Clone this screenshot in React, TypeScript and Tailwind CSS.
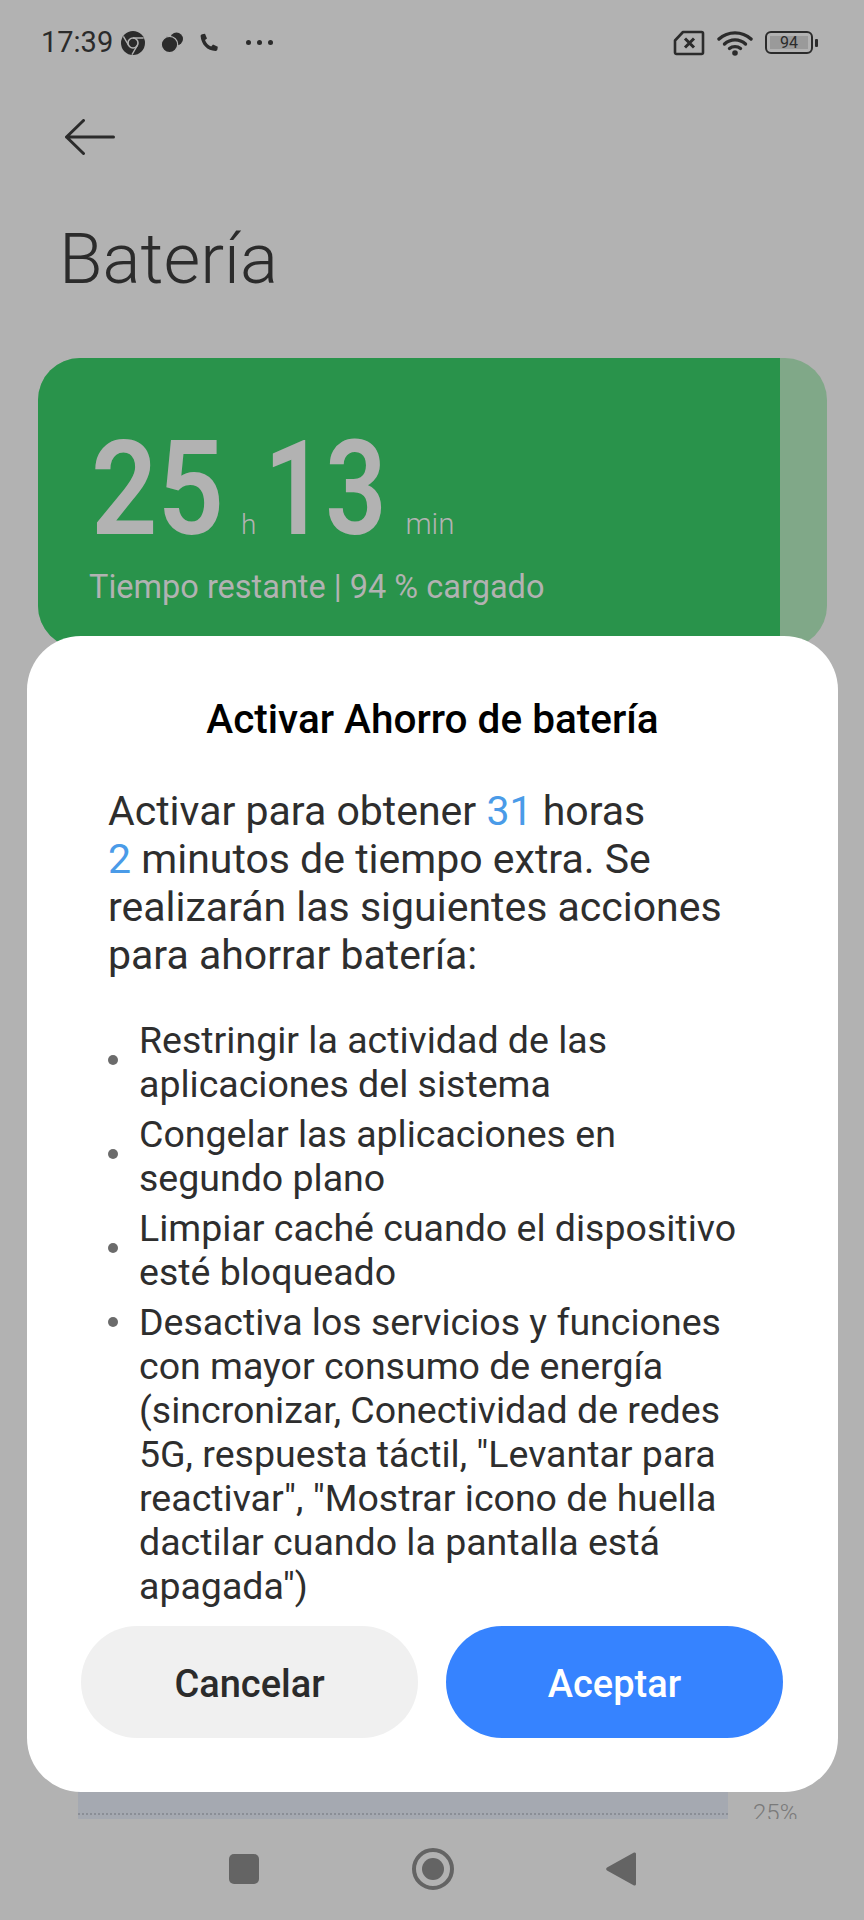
import React from "react"

const items = [
    ["Restringir la actividad de las", "aplicaciones del sistema"],
    ["Congelar las aplicaciones en", "segundo plano"],
    ["Limpiar caché cuando el dispositivo", "esté bloqueado"],
]

const lastItem = [
    "Desactiva los servicios y funciones",
    "con mayor consumo de energía",
    "(sincronizar, Conectividad de redes",
    '5G, respuesta táctil, "Levantar para',
    'reactivar", "Mostrar icono de huella',
    "dactilar cuando la pantalla está",
    'apagada")',
]

const ChromeIcon = () => (
    <svg width="24" height="24" viewBox="0 0 24 24">
        <circle cx="12" cy="12" r="12" fill="#2b2b2b" />
        <circle cx="12" cy="12" r="5" fill="#2b2b2b" stroke="#b2b2b2" strokeWidth="1.6" />
        <path d="M12 7h10.6M7.7 14.5 2.4 5.4M16.3 14.5 11 23.6" stroke="#b2b2b2" strokeWidth="1.4" fill="none" />
    </svg>
)

const BubblesIcon = () => (
    <svg width="24" height="24" viewBox="0 0 24 24" fill="#2b2b2b">
        <circle cx="16.5" cy="8" r="6.5" />
        <circle cx="9.5" cy="13.5" r="8.2" stroke="#b2b2b2" strokeWidth="1.2" />
    </svg>
)

const PhoneIcon = () => (
    <svg width="20" height="20" viewBox="0 0 20 20" fill="#2b2b2b">
        <path d="M3.2 1.2 6 .8l2 4.6-2 1.7c.9 2.9 3.4 5.4 6.2 6.4l1.8-2 4.8 2.2-.4 2.9c-.2.9-1 1.5-1.9 1.4C8.400 18 2.200 11.500 1.600 3.100c-.1-.9.600-1.700 1.600-1.900Z" />
    </svg>
)

const SimIcon = () => (
    <svg width="32" height="26" viewBox="0 0 32 26" fill="none" stroke="#2b2b2b">
        <path d="M10 2h18.500c.8 0 1.500.7 1.500 1.500v19c0 .8-.7 1.500-1.500 1.500h-25c-.8 0-1.500-.7-1.500-1.500V10.500Z" strokeWidth="2.600" strokeLinejoin="round" />
        <path d="M12 8.500l9 9M21 8.500l-9 9" strokeWidth="3" />
    </svg>
)

const WifiIcon = () => (
    <svg width="36" height="26" viewBox="0 0 36 26" fill="none" stroke="#2b2b2b" strokeWidth="3.400" strokeLinecap="round">
        <path d="M2 9C11 .8 25 .8 34 9" />
        <path d="M7.500 14C13.500 8.500 22.500 8.500 28.500 14" />
        <path d="M12.500 18.500C15.500 16 20.500 16 23.500 18.500" />
        <circle cx="18" cy="23" r="2.800" fill="#2b2b2b" stroke="none" />
    </svg>
)

const BatteryIcon = () => (
    <div className="flex items-center gap-[2px]">
        <div className="flex h-[23px] w-[48px] items-center justify-center rounded-[6px] border-[2px] border-[#2b2b2b] p-[3px]">
            <div className="flex h-full w-full items-center justify-center bg-[#9a9a9a] text-[16px] leading-none text-[#2b2b2b]">94</div>
        </div>
        <div className="h-[8px] w-[3px] rounded-[1px] bg-[#2b2b2b]" />
    </div>
)

const StatusBar = () => (
    <div className="flex h-[85px] shrink-0 items-center justify-between pl-[41px] pr-[46px]">
        <div className="flex items-center">
            <span className="w-[80px] text-[29px] leading-none text-[#2b2b2b]">17:39</span>
            <ChromeIcon />
            <span className="ml-[15px]"><BubblesIcon /></span>
            <span className="ml-[15px]"><PhoneIcon /></span>
            <span className="ml-[27px] flex gap-[6px]">
                <span className="h-[5px] w-[5px] rounded-full bg-[#2b2b2b]" />
                <span className="h-[5px] w-[5px] rounded-full bg-[#2b2b2b]" />
                <span className="h-[5px] w-[5px] rounded-full bg-[#2b2b2b]" />
            </span>
        </div>
        <div className="flex items-center gap-[12px]">
            <SimIcon />
            <WifiIcon />
            <BatteryIcon />
        </div>
    </div>
)

const NavBar = () => (
    <div className="absolute bottom-0 left-0 flex h-[102px] w-full items-center">
        <div className="ml-[229px] h-[30px] w-[30px] rounded-[5px] bg-[#646464]" />
        <div className="ml-[153px] flex h-[42px] w-[42px] items-center justify-center rounded-full border-[4px] border-[#646464]">
            <div className="h-[22px] w-[22px] rounded-full bg-[#646464]" />
        </div>
        <svg className="ml-[152px]" width="30" height="36" viewBox="0 0 30 36" fill="#646464">
            <path d="M28 1.500a1.500 1.500 0 0 1 2 1.500v30a1.500 1.500 0 0 1-2 1.500L1 19.500a2 2 0 0 1 0-3Z" />
        </svg>
    </div>
)

const Dialog = () => (
    <div className="absolute left-[27px] top-[636px] flex h-[1156px] w-[811px] flex-col rounded-[54px] bg-white px-[54px]">
        <h2 className="mt-[60px] text-center text-[40.5px] font-medium leading-[46px] text-black">Activar Ahorro de batería</h2>
        <p className="mt-[45px] whitespace-nowrap pl-[27px] text-[41px] leading-[48px] text-[#2e2e2e]">
            Activar para obtener <span className="text-[#4a9be8]">31</span> horas
            <br />
            <span className="text-[#4a9be8]">2</span> minutos de tiempo extra. Se
            <br />
            realizarán las siguientes acciones
            <br />
            para ahorrar batería:
        </p>
        <ul className="mt-[39px] flex flex-col gap-[6px] whitespace-nowrap pl-[27px] text-[37.5px] leading-[44px] text-[#2e2e2e]">
            {items.map((lines) => (
                <li key={lines[0]} className="flex items-center">
                    <span className="mb-[5px] mr-[21px] h-[10px] w-[10px] shrink-0 rounded-full bg-[#6b6b6b]" />
                    <span>
                        {lines[0]}
                        <br />
                        {lines[1]}
                    </span>
                </li>
            ))}
            <li className="flex items-start">
                <span className="mr-[21px] mt-[17px] h-[10px] w-[10px] shrink-0 rounded-full bg-[#6b6b6b]" />
                <span>
                    {lastItem.map((line) => (
                        <React.Fragment key={line}>
                            {line}
                            <br />
                        </React.Fragment>
                    ))}
                </span>
            </li>
        </ul>
        <div className="mt-[18px] flex gap-[28px]">
            <button className="h-[112px] w-[337px] rounded-full bg-[#f0f0f0] pt-[4px] text-[38px] font-medium text-[#2b2b2b]">Cancelar</button>
            <button className="h-[112px] w-[337px] rounded-full bg-[#3683ff] pt-[4px] text-[38px] font-medium text-white">Aceptar</button>
        </div>
    </div>
)

export default function App() {
    return (
        <div className="relative flex h-[1920px] w-[864px] flex-col overflow-hidden bg-[#b2b2b2] font-['Roboto',sans-serif]">
            <StatusBar />

            {/* header */}
            <div className="ml-[65px] mt-[34px]">
                <svg className="block" width="50" height="36" viewBox="0 0 50 36" fill="none" stroke="#2b2b2b" strokeWidth="3" strokeLinecap="round" strokeLinejoin="round">
                    <path d="M1.500 18h47M18.500 1.500 1.500 18l17 16.500" />
                </svg>
            </div>
            <h1 className="ml-[59px] mt-[63px] text-[71px] font-light leading-[82px] text-[#2b2b2b]">Batería</h1>

            {/* battery card */}
            <div className="ml-[38px] mt-[58px] flex h-[290px] w-[789px] shrink-0 overflow-hidden rounded-[42px] bg-[#80a888]">
                <div className="w-[742px] bg-[#29934b] pl-[53px] pt-[81px]">
                    <div className="flex items-baseline text-[#b2b2b2]">
                        <span className="inline-block w-[150px] origin-left scale-x-[0.89] whitespace-nowrap text-[131px] font-semibold leading-[100px]">25</span>
                        <span className="text-[28px] font-light leading-none">h</span>
                        <span className="ml-[8px] inline-block w-[141px] origin-left scale-x-[0.82] whitespace-nowrap text-[131px] font-semibold leading-[100px]">13</span>
                        <span className="text-[29.5px] font-light leading-none">min</span>
                    </div>
                    <div className="ml-[-2px] mt-[27px] text-[32.5px] leading-[40px] text-[#b2b2b2]">Tiempo restante | 94 % cargado</div>
                </div>
            </div>

            {/* chart bit behind the dialog */}
            <div className="absolute left-[78px] top-[1780px] flex h-[39px] w-[650px] items-end bg-[#a5a9b1] pb-[4px]">
                <div className="w-full border-b-[2px] border-dotted border-[#8a8e96]" />
            </div>
            <div className="absolute left-[753px] top-[1799px] h-[20px] overflow-hidden text-[24px] font-light leading-[28px] text-[#7a7a7a]">25%</div>

            <Dialog />
            <NavBar />
        </div>
    )
}
